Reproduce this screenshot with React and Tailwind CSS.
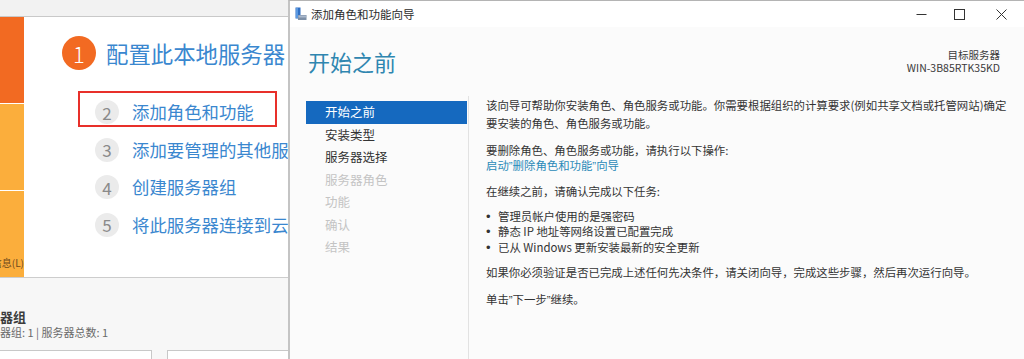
import React from "react";

const navItems = [
  { t: "开始之前", s: "active" },
  { t: "安装类型", s: "on" },
  { t: "服务器选择", s: "on" },
  { t: "服务器角色", s: "off" },
  { t: "功能", s: "off" },
  { t: "确认", s: "off" },
  { t: "结果", s: "off" },
];

const steps = [
  { n: "2", t: "添加角色和功能" },
  { n: "3", t: "添加要管理的其他服务器" },
  { n: "4", t: "创建服务器组" },
  { n: "5", t: "将此服务器连接到云服务" },
];

function Q({ c }) {
  return <span className="font-['Liberation_Sans',sans-serif]">{c}</span>;
}

function Bullet() {
  return <span className="inline-block w-[12px] font-['Liberation_Sans',sans-serif] text-[13px]">•</span>;
}

function LeftPanel() {
  return (
    <div className="w-[288px] shrink-0 flex flex-col overflow-hidden bg-[#f7f7f7]">
      <div className="h-[17px] shrink-0 bg-[#f2f2f2] border-b border-[#c9c9c9]" />
      <div className="h-[261px] shrink-0 flex bg-white border-b border-[#cdcdcd]">
        <div className="w-[24px] shrink-0 flex flex-col gap-[1px] bg-white">
          <div className="h-[86px] bg-[#f26a22]" />
          <div className="h-[86px] bg-[#fbae3c]" />
          <div className="flex-1 bg-[#fbae3c] flex items-end justify-end overflow-hidden pb-[8px]">
            <span className="whitespace-nowrap text-[10px] leading-[12px] text-[#6e4a1c]">了解详细信息(L)</span>
          </div>
        </div>
        <div className="relative flex-1 flex flex-col pl-[38px] pt-[19px]">
          <div className="flex items-center h-[34px]">
            <div className="w-[34px] h-[34px] rounded-full bg-[#f26a22] flex items-center justify-center text-white text-[22px] font-light leading-none">1</div>
            <span className="ml-[10px] whitespace-nowrap text-[22.4px] leading-[28px] text-[#3a87cf]">配置此本地服务器</span>
          </div>
          <div className="mt-[23.5px] flex flex-col pl-[33px]">
            {steps.map((s) => (
              <div key={s.n} className="h-[37.5px] flex items-center">
                <div className="w-[24px] h-[24px] shrink-0 rounded-full bg-[#ebebeb] flex items-center justify-center text-[17px] leading-none text-[#8a8a8a]">{s.n}</div>
                <span className="ml-[13px] whitespace-nowrap text-[17.4px] leading-[22px] text-[#3a87cf]">{s.t}</span>
              </div>
            ))}
          </div>
          <div className="absolute left-[54px] top-[74px] w-[199px] h-[36px] border-2 border-[#e8302a]" />
        </div>
      </div>
      <div className="flex-1 pt-[31px]">
        <div className="-ml-[26px] whitespace-nowrap text-[13px] leading-[16px] font-bold text-[#3c3c3c]">服务器组</div>
        <div className="-ml-[55px] whitespace-nowrap text-[11px] leading-[15px] text-[#6a6a6a]">角色和服务器组: 1 | 服务器总数: 1</div>
        <div className="mt-[10px] flex gap-[15px] -ml-[40px]">
          <div className="w-[192px] h-[30px] shrink-0 bg-white border border-[#c8c8c8]" />
          <div className="w-[150px] h-[30px] shrink-0 bg-white border border-[#c8c8c8]" />
        </div>
      </div>
    </div>
  );
}

function Dialog() {
  return (
    <div className="flex-1 flex flex-col border-l-2 border-[#c4c4c4] border-t border-t-[#b4b4b4] bg-[#fbfbfb]">
      <div className="h-[26px] shrink-0 flex items-center bg-white pl-[5px]">
        <svg width="12" height="14" viewBox="0 0 12 14" className="shrink-0">
          <rect x="0.5" y="0.5" width="5" height="11" fill="#2f6fc4" />
          <rect x="1" y="1" width="2" height="10" fill="#5a98e0" />
          <rect x="3" y="8" width="8.5" height="5" fill="#7d8fa6" />
          <rect x="3.5" y="8.5" width="7.5" height="2" fill="#a9b8cc" />
        </svg>
        <span className="ml-[4px] whitespace-nowrap text-[11.5px] leading-[14px] text-[#2b2b2b]">添加角色和功能向导</span>
        <div className="ml-auto flex items-center h-full">
          <div className="w-[38px] h-full flex items-center justify-center">
            <svg width="11" height="11" viewBox="0 0 11 11"><line x1="0.5" y1="5.5" x2="10.5" y2="5.5" stroke="#333" strokeWidth="1" /></svg>
          </div>
          <div className="w-[38px] h-full flex items-center justify-center">
            <svg width="11" height="11" viewBox="0 0 11 11"><rect x="0.5" y="0.5" width="10" height="10" fill="none" stroke="#333" strokeWidth="1" /></svg>
          </div>
          <div className="w-[46px] h-full flex items-center justify-center">
            <svg width="11" height="11" viewBox="0 0 11 11"><path d="M0.5 0.5 L10.5 10.5 M10.5 0.5 L0.5 10.5" stroke="#333" strokeWidth="1" /></svg>
          </div>
        </div>
      </div>
      <div className="h-[69px] shrink-0 flex justify-between pl-[18px] pr-[24px]">
        <div className="pt-[20px] whitespace-nowrap text-[22px] leading-[28px] text-[#2f86b0]">开始之前</div>
        <div className="pt-[22px] flex flex-col items-end text-[10.5px] leading-[12.5px] text-[#3a3a3a]">
          <span>目标服务器</span>
          <span>WIN-3B85RTK35KD</span>
        </div>
      </div>
      <div className="flex-1 flex">
        <div className="w-[178px] shrink-0 pl-[16px] pt-[5px]">
          <div className="w-[161px] flex flex-col">
            {navItems.map((it) => (
              <div
                key={it.t}
                className={
                  it.s === "active"
                    ? "h-[22.6px] flex items-center pl-[19px] bg-[#1569bf] text-white text-[12.5px]"
                    : it.s === "on"
                    ? "h-[22.6px] flex items-center pl-[19px] text-[#333333] text-[12.5px]"
                    : "h-[22.6px] flex items-center pl-[19px] text-[#c4c4c4] text-[12.5px]"
                }
              >
                {it.t}
              </div>
            ))}
          </div>
        </div>
        <div className="flex-1 border-l border-[#e2e2e2] pl-[17px] text-[11.4px] text-[#333333]">
          <p className="leading-[18px] whitespace-nowrap">
            该向导可帮助你安装角色、角色服务或功能。你需要根据组织的计算要求(例如共享文档或托管网站)确定
            <br />
            要安装的角色、角色服务或功能。
          </p>
          <p className="mt-[11px] leading-[15px] whitespace-nowrap">
            要删除角色、角色服务或功能，请执行以下操作:
            <br />
            <span className="text-[#2a8ab8]">启动<Q c="”" />删除角色和功能<Q c="”" />向导</span>
          </p>
          <p className="mt-[10px] leading-[15px] whitespace-nowrap">在继续之前，请确认完成以下任务:</p>
          <ul className="mt-[9.5px] leading-[15.5px] whitespace-nowrap">
            <li><Bullet />管理员帐户使用的是强密码</li>
            <li><Bullet />静态 IP 地址等网络设置已配置完成</li>
            <li><Bullet />已从 Windows 更新安装最新的安全更新</li>
          </ul>
          <p className="mt-[10px] leading-[15px] whitespace-nowrap">如果你必须验证是否已完成上述任何先决条件，请关闭向导，完成这些步骤，然后再次运行向导。</p>
          <p className="mt-[12px] leading-[15px] whitespace-nowrap">单击<Q c="”" />下一步<Q c="”" />继续。</p>
        </div>
      </div>
    </div>
  );
}

export default function App() {
  return (
    <div className="flex w-[1024px] h-[359px] overflow-hidden bg-white font-['Noto_Sans_CJK_SC','Noto_Sans',sans-serif]">
      <LeftPanel />
      <Dialog />
    </div>
  );
}
